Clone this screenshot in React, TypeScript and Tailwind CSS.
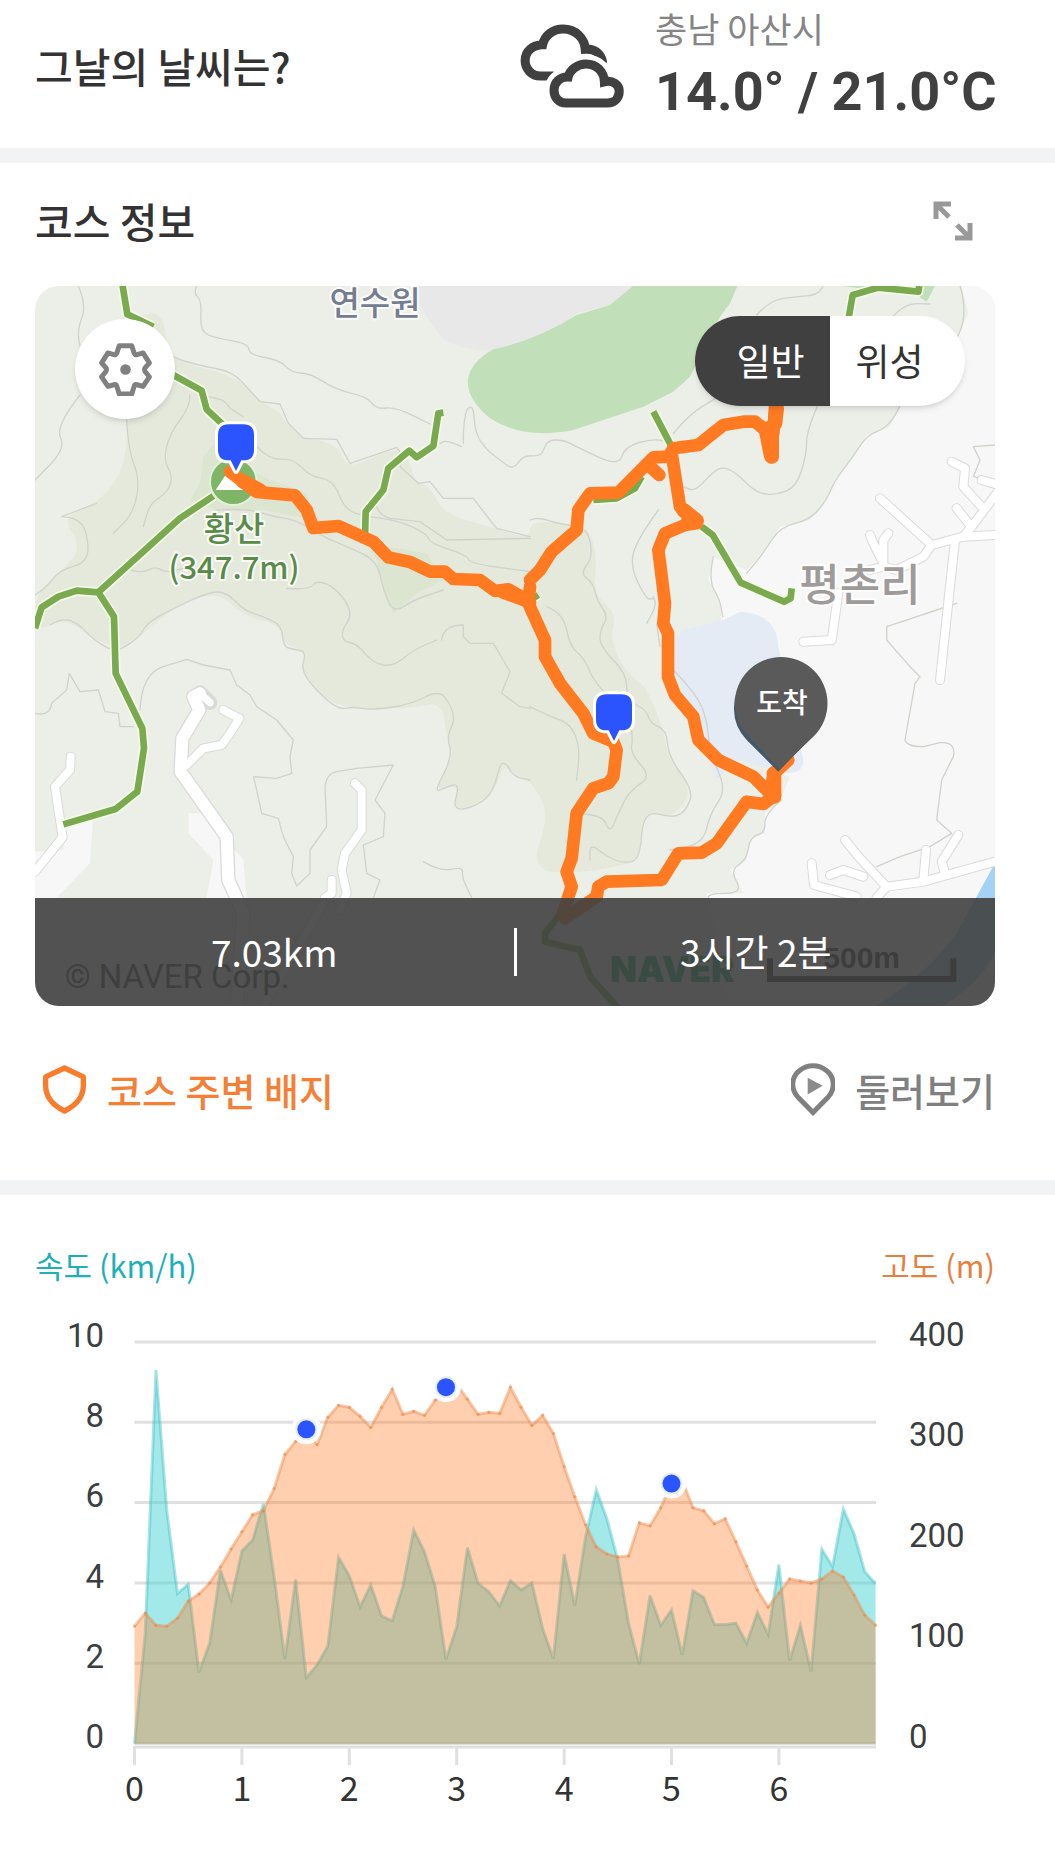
import { useState } from "react";

const speeds = [
  0, 2.75, 9.3, 5.82, 3.74, 3.97, 1.78, 2.5, 4.32, 3.58, 4.8, 5.07, 5.97, 4.16, 2.11, 4.09, 1.65, 1.96,
  2.43, 4.64, 4.18, 3.41, 3.95, 3.18, 3.06, 3.93, 5.32, 4.78, 3.91, 2.1, 2.91, 4.88, 3.99, 3.78, 3.43,
  4.06, 3.83, 4, 2.87, 2.12, 4.72, 3.44, 5.15, 6.32, 5.58, 4.57, 3, 1.98, 3.69, 2.95, 3.33, 2.21, 3.81,
  3.64, 2.97, 2.97, 3, 2.5, 3.27, 2.72, 4.46, 2.07, 2.95, 1.8, 4.84, 4.41, 5.84, 5.22, 4.28, 3.99,
];

const altitudes = [
  117, 130, 118, 117, 125, 142, 149, 160, 176, 194, 211, 228, 232, 254, 288, 301, 313, 298, 325, 337,
  335, 326, 315, 335, 353, 328, 331, 327, 342, 355, 358, 343, 328, 330, 329, 355, 335, 317, 327, 309,
  276, 246, 218, 196, 189, 186, 187, 220, 217, 235, 259, 262, 235, 232, 219, 224, 201, 177, 153, 136,
  150, 164, 162, 160, 164, 172, 166, 148, 128, 118,
];

const spots = [16, 29, 50];

const contours = [
  "M145 18L170 75L142 150L150 200M150 345L75 440L108 505L15 600",
  "M500 18L490 40L515 60L510 155L560 175L655 190L658 225L750 240L785 278L840 280L920 330L1010 350L1040 388L1095 380L1200 432",
  "M415 220C440 240 480 248 520 258S600 265 640 310L690 365L750 372L775 430L820 475L920 478L960 550L1020 530L1100 502L1120 530L1110 560L1165 610L1200 605L1240 655L1330 655L1380 720L1400 745L1500 770",
  "M520 345C560 360 580 350 600 385L640 410M680 500L720 540L790 535L840 590L910 600L945 690L1010 710L1100 720L1190 760L1200 790L1310 825L1320 850L1500 875",
  "M1040 650Q1030 700 1080 715L1170 725L1250 780L1500 775",
  "M290 420L295 510L330 600L310 700L250 760M480 345L480 380L420 460L400 540L430 590L410 640L360 670L340 740",
  "M95 710L155 712L178 800L165 850L90 870L50 920L15 945M200 670L160 685L95 710",
  "M300 870L340 880L375 858L410 880L470 862M560 690L650 685L730 710L800 720L880 770L950 800L1040 840L1060 930L1090 1000L1150 960L1240 930",
  "M770 925L840 930L860 900L920 925L970 1000L935 1050L940 1085L980 1090L1030 1150L1090 1160L1150 1110L1220 1080",
  "M60 1035L100 1012L150 1035L180 1070L240 1110L270 1110L330 1070L350 1030L420 990L550 930L600 945L640 990L700 1010L755 1035L760 1100L790 1108L830 1115L810 1180L920 1290L970 1280L1020 1290L1140 1275L1225 1230L1260 1270L1275 1320L1250 1370L1268 1430L1210 1540L1250 1520L1290 1510L1265 1600L1370 1565L1400 1500L1410 1450L1430 1450L1450 1490L1500 1500",
  "M1235 1080Q1240 1035 1300 1035L1300 1070L1320 1090L1390 1090L1440 1175L1415 1240L1470 1280L1500 1285",
  "M330 1290Q335 1180 400 1160L470 1138L520 1155L600 1170L620 1215L660 1245L680 1280L740 1320L790 1380L780 1430L785 1480L740 1495L670 1490L680 1530L695 1600L745 1615L760 1670L790 1730L785 1780L800 1818L840 1780L840 1710L890 1640L885 1520Q890 1480 920 1475L980 1465L1090 1455L1035 1560L1065 1600L1060 1670L1000 1695L1010 1780L1050 1800L1030 1853",
  "M15 1300Q60 1310 65 1270L110 1230L118 1180L150 1235L205 1230L225 1295L265 1300L270 1340L310 1340M1180 1745L1230 1775L1300 1760L1295 1790L1325 1853",
  "M1295 500L1250 480L1230 490M1300 490L1300 400L1330 370L1335 460L1370 510L1410 540L1450 570L1480 525L1535 530L1550 480L1600 480L1640 500L1765 560L1785 500L1870 475L1930 490",
  "M1930 460L1980 400L2060 355L2110 310L2250 260M2180 105L2220 60L2300 50L2360 45L2380 18M2370 360L2330 450L2330 520L2300 620L2240 645L2180 640L2120 580L2080 560L2050 575L1995 635L1960 620",
  "M2590 108L2625 70L2700 72M2790 18L2815 100L2760 220M2610 378L2580 440L2510 465L2470 530L2415 600L2390 660L2340 720L2250 740L2200 820L2150 880",
  "M1500 720L1520 710L1600 735L1670 740L1690 830L1650 880L1690 910L1700 960L1735 1010L1710 1050L1710 1100L1790 1180L1790 1260L1850 1290L1860 1330L1910 1350L1915 1430L1990 1530L1970 1590L1930 1615L1840 1590L1830 1740L1780 1750L1730 1730L1680 1690L1680 1740",
  "M1885 690L1820 780L1800 860L1850 960L1870 955M1850 1030L1880 980L1870 950M1550 980L1600 1000L1620 1100L1660 1130L1700 1220L1790 1290L1810 1370L1800 1420L1865 1490L1800 1530L1765 1600L1740 1660L1720 1610L1650 1600",
  "M1500 1280L1560 1310L1620 1330L1650 1400L1640 1500M2050 830L2035 900L2070 960L2078 1010M1890 1100L1880 1030M1920 1160L1990 1230L2030 1310L2040 1420L2090 1530L2040 1600L2020 1690L1920 1710",
  "M2255 1560L2205 1600L2205 1660L2160 1670L2150 1740L2100 1770L2140 1840L2030 1840L2040 1870",
];

// narrow farm roads around the villages
const lanes = [
  "M15 1775L98 1672L75 1520L120 1470L122 1430",
  "M470 1455L520 1405L575 1395L600 1360L628 1315L580 1290",
  "M2550 655L2705 795M2705 795L2680 830L2600 870L2560 860L2520 870M2705 795L2800 770L2900 765",
  "M2800 770L2825 740L2900 640M2820 735L2780 685M2850 675L2800 620L2805 565L2765 545M2855 600L2895 612",
  "M2775 780L2730 1200M2560 850L2530 790L2520 765M2560 850L2560 780L2575 760M2425 940L2405 1080L2320 1085",
  "M2345 1750L2352 1815L2480 1850M2445 1680L2490 1735L2570 1820L2540 1853M2570 1820L2680 1805L2895 1745M2680 1800L2688 1710M2745 1780L2735 1745L2785 1665M2400 1785L2440 1770L2500 1790",
  "M975 1510L995 1530L995 1650L945 1720L935 1770L950 1840L930 1890M905 1800L905 1840L885 1853M880 1870L700 2180",
];

const trails = [
  "M275 0L292 103L370 140M430 285L515 332L530 388L580 435",
  "M1240 398L1225 400L1210 498L1160 532L1138 512L1075 565L1060 630L1007 695L1005 770",
  "M550 648L450 715L205 937L140 932L85 950L35 982L15 1045M205 937L252 1010L257 1180L337 1345L342 1405L322 1535L257 1587L100 1633",
  "M1870 395L1925 500M2015 740L2048 765L2132 908L2262 965L2282 955L2285 925M2455 120L2468 45L2545 23L2665 35L2668 18",
  "M1690 660L1760 655L1815 625L1835 590M1500 960L1525 945M1590 1902L1545 1960L1545 1985L1650 2010L1680 2090L1770 2190",
];

// walked route
const route = [
  "M600 575L680 636L795 646L830 690L850 744L925 738L1030 785L1075 832L1140 846L1200 875L1245 875L1270 897L1350 900L1395 933L1435 928L1500 965",
  "M1500 900L1530 870L1565 815L1640 750L1645 690L1680 640L1765 638L1870 532L1915 530L1930 505L2005 495L2080 435L2140 425L2175 425L2205 450L2220 525",
  "M1855 555L1888 585M2235 380L2230 460L2195 440",
  "M1925 520L1950 680L2000 730L1965 735L1905 760L1885 810L1905 970L1900 1030L1914 1060L1914 1190L1935 1245L1990 1310L2005 1380L2065 1440L2170 1490L2220 1540L2232 1480L2275 1440",
  "M1500 920L1495 970L1545 1080L1545 1130L1590 1210L1660 1300L1690 1360L1750 1385L1760 1410L1750 1490L1735 1510L1690 1525L1640 1600L1625 1735L1610 1775L1625 1820L1600 1895L1605 1915L1700 1850L1705 1820L1730 1805L1895 1800L1945 1720L2015 1718L2060 1690L2150 1565L2200 1572L2235 1545",
];

// rounds the corners of an M/L path by curving through segment midpoints
function smooth(d: string) {
  return d
    .split("M")
    .filter(Boolean)
    .map((part) => {
      if (/[QCS]/.test(part)) return `M${part}`;
      const pts = part.replace("Z", "").split("L").map((p) => p.split(" ").map(Number));
      const last = pts[pts.length - 1];
      let out = `M${pts[0][0]} ${pts[0][1]}`;
      for (let i = 1; i < pts.length - 1; i++) {
        out += `Q${pts[i][0]} ${pts[i][1]} ${(pts[i][0] + pts[i + 1][0]) / 2} ${(pts[i][1] + pts[i + 1][1]) / 2}`;
      }
      return `${out}L${last[0]} ${last[1]}`;
    })
    .join("");
}

function areaPoints(values: number[], max: number) {
  return values.map((v, i) => `${134.5 + i * 10.74},${1743.7 - (v / max) * 401.7}`).join(" ");
}

function CloudIcon() {
  return (
    <svg viewBox="30 56 309 250" className="h-[84px] w-[104px]" fill="none" stroke="#404040" strokeWidth="27" aria-hidden="true">
      <path d="M130 211H90C65 211 45 190 45 165C45 138 66 119 97 118C103 90 128 71 158 71C195 71 222 98 224 131C250 129 272 142 276 172" />
      <path d="M166 291C145 291 131 274 131 253C131 230 148 213 173 214C178 192 200 175 226 175C258 175 280 198 281 228C305 222 325 236 325 256C325 277 310 291 290 291Z" stroke="#fff" strokeWidth="56" fill="#fff" />
      <path d="M166 291C145 291 131 274 131 253C131 230 148 213 173 214C178 192 200 175 226 175C258 175 280 198 281 228C305 222 325 236 325 256C325 277 310 291 290 291Z" />
    </svg>
  );
}

function GearIcon() {
  return (
    <svg viewBox="205 187 160 160" className="h-[53px] w-[53px]" aria-hidden="true">
      <path
        d="M266 195H304L311 217Q313 224 320 222L338 217L357 247L344 262Q341 267 344 273L357 289L338 318L320 313Q313 311 311 318L304 341H266L259 318Q257 311 250 313L232 318L213 289L226 273Q229 267 226 262L213 247L232 217L250 222Q257 224 259 217Z"
        fill="none"
        stroke="#808080"
        strokeWidth="15"
        strokeLinejoin="round"
      />
      <circle cx="285" cy="267" r="16" fill="#808080" />
    </svg>
  );
}

function Waypoint({ x, y }: { x: number; y: number }) {
  return (
    <path
      transform={`translate(${x} ${y})`}
      d="M-22 -54H22Q54 -54 54 -22V22Q54 54 22 54H16L0 86L-16 54H-22Q-54 54 -54 22V-22Q-54 -54 -22 -54Z"
      fill="#2b54ff"
      stroke="#fff"
      strokeWidth="18"
      paintOrder="stroke"
      strokeLinejoin="round"
    />
  );
}

function CourseMap() {
  return (
    <svg viewBox="15 18 2880 2160" className="block w-full" strokeLinejoin="round" strokeLinecap="round" role="img" aria-label="코스 지도">
      <rect x="15" y="18" width="2880" height="2160" fill="#ecefe8" />
      <path d="M2790 0L2815 100L2760 220L2610 378L2580 440L2510 465L2470 530L2415 600L2390 660L2340 720L2250 740L2200 820L2150 870L2050 830L2035 900L2070 960L2078 1080L2255 1560L2205 1600L2205 1660L2160 1670L2150 1740L2100 1770L2140 1840L2030 1840L2100 2200H2900V0Z" fill="#f7f7f7" />
      <path
        d={smooth(
          "M335 108L375 90L405 130L415 220L480 255L620 290L700 372L750 395L800 470L920 490L950 560L1000 545L1100 502L1140 540L1150 600L1200 620L1240 700L1380 740L1500 778L1500 720L1660 735L1690 780L1700 850L1690 940L1760 1000L1740 1080L1790 1180L1850 1220L1900 1350L1915 1430L1990 1530L1930 1615L1840 1590L1830 1740L1760 1760L1640 1780L1500 1770L1560 1600L1500 1500L1450 1490L1420 1450L1390 1550L1265 1600L1290 1510L1210 1540L1265 1430L1250 1370L1235 1265L1150 1285L920 1290L810 1180L830 1120L790 1100L760 1090L750 1035L640 1010L560 930L420 990L330 1070L270 1110L180 1070L100 1012L15 1060L15 940L100 870L155 800L95 710L200 670L270 590L290 500L290 420L340 350Z",
        )}
        fill="#e5e9dc"
      />
      <path d="M570 470L520 530L510 610L480 660L560 690L700 690L850 720L830 640L700 590L650 560ZM1010 790L1190 820L1240 900L1160 940L1090 1000L1060 930L1040 840Z" fill="#dce5d0" />
      <path d="M2060 1500L1930 1190L1935 1080L1960 1050L2080 1020L2130 995Q2240 1000 2245 1100L2320 1440Q2320 1480 2270 1480L2120 1440Z" fill="#e4ebf4" />
      <path d="M1935 1180L1985 1290L2050 1430L2120 1445L2280 1490L2250 1560L2150 1550L1950 1300Z" fill="#ecefe8" />
      <path d="M15 1715L100 1710L100 1630L190 1600L180 1750L80 1853H15ZM475 1600H520L640 1740L650 1853H530L550 1740L475 1660Z" fill="#f7f7f7" />
      <path d="M1160 0V60Q1195 120 1235 175Q1300 215 1400 212Q1520 200 1640 100L1740 75L1830 0Z" fill="#e8e8e8" />
      <path d="M1390 208Q1520 180 1640 105L1740 75L1830 0H2130L2100 70L2070 110L1980 290L1930 335L1840 380L1630 450Q1480 480 1380 415C1280 330 1300 260 1390 208ZM2435 18H2715L2690 65L2650 40L2560 34Z" fill="#c1e0b9" />
      <path d="M2900 1740Q2840 1850 2780 1960Q2680 2100 2500 2200H2700Q2880 2100 2900 1990Z" fill="#a3d2f5" />

      <g fill="none" stroke="#d0d3cb" strokeWidth="4">
        {contours.map((d) => (
          <path key={d} d={smooth(d)} />
        ))}
        <path d="M2780 970L2720 990L2570 1040V1080L2640 1160L2670 1190L2655 1210L2625 1380Q2630 1400 2680 1400L2730 1388Q2780 1385 2770 1430L2735 1500L2720 1620L2765 1660L2700 1700L2610 1730L2540 1760M2880 600L2830 590L2850 540L2830 500L2895 495" />
      </g>

      <g fill="none" stroke="#dadada">
        <path d="M540 1268L510 1238L490 1250L508 1290L457 1375L452 1475L590 1670L595 1800L640 1900L620 2180" strokeWidth="44" />
        {lanes.map((d) => (
          <path key={d} d={d} strokeWidth="30" />
        ))}
      </g>
      <g fill="none" stroke="#fff">
        <path d="M510 1240L490 1250L508 1290L457 1375L452 1475L590 1670L595 1800L640 1900L620 2180" strokeWidth="36" />
        <path d="M540 1268L510 1240" strokeWidth="22" />
        {lanes.map((d) => (
          <path key={d} d={d} strokeWidth="24" />
        ))}
      </g>

      <g fill="none" strokeLinecap="butt">
        {trails.map((d) => (
          <path key={d} d={d} stroke="#f4fbe9" strokeWidth="30" />
        ))}
        {trails.map((d) => (
          <path key={d} d={d} stroke="#7aa94f" strokeWidth="20" />
        ))}
      </g>

      <circle cx="610" cy="605" r="70" fill="#7fb566" stroke="#e4f0da" strokeWidth="6" />
      <path d="M557 630L610 550L663 630Z" fill="#fff" />

      <g fill="none" stroke="#ff7a20" strokeWidth="38">
        {route.map((d) => (
          <path key={d} d={d} />
        ))}
        <path d="M1960 690L2000 722M2225 440V530M1990 715L1975 725M2232 1480V1550M2240 385L2235 430M640 605L690 632M1420 935L1490 960" strokeWidth="44" />
      </g>

      <g fontFamily="'Noto Sans CJK KR', sans-serif" textAnchor="middle" stroke="#fff" strokeWidth="12" strokeOpacity="0.8" paintOrder="stroke" fontWeight="500">
        <text x="1035" y="105" fontSize="99" fill="#757d91">연수원</text>
        <text x="612" y="782" fontSize="99" fill="#5b8b48">황산</text>
        <text x="612" y="897" fontSize="93" fill="#5b8b48">(347.7m)</text>
        <text x="2490" y="962" fontSize="132" fill="#a09b9b">평촌리</text>
      </g>

      <Waypoint x={618} y={487} />
      <Waypoint x={1752} y={1297} />

      <path d="M2245 1475L2150 1380Q2112 1340 2112 1288A139 139 0 0 1 2390 1277Q2390 1320 2352 1364Z" fill="#45586a" />
      <path d="M2248 1468L2155 1368A139 139 0 1 1 2352 1368Z" fill="#5a5a5a" />
      <text x="2256" y="1298" fontSize="84" fontWeight="500" fill="#fff" textAnchor="middle" fontFamily="'Noto Sans CJK KR', sans-serif">도착</text>

      <text x="104" y="2123" fontSize="99" fill="#333" fontFamily="Roboto, sans-serif">© NAVER Corp.</text>
      <text x="1740" y="2105" fontSize="105" fontWeight="900" fill="#00a860" fontFamily="Inter, sans-serif">NAVER</text>
      <text x="2495" y="2065" fontSize="90" fontWeight="700" fill="#222" textAnchor="middle" fontFamily="'Liberation Sans', sans-serif">500m</text>
      <path d="M2220 2035V2097H2770V2035" fill="none" stroke="#222" strokeWidth="18" strokeLinecap="butt" strokeLinejoin="miter" />
    </svg>
  );
}

function CourseChart() {
  const speedLine = areaPoints(speeds, 10);
  const altitudeLine = areaPoints(altitudes, 400);

  return (
    <svg viewBox="0 1310 1055 500" className="block w-full" role="img" aria-label="속도와 고도">
      <g stroke="#e0e0e0" strokeWidth="3">
        {[0, 1, 2, 3, 4, 5].map((n) => (
          <line key={n} x1="134.5" x2="876" y1={1342 + n * 80.3} y2={1342 + n * 80.3} />
        ))}
        <line x1="134.5" x2="876" y1="1747" y2="1747" />
        {[0, 1, 2, 3, 4, 5, 6].map((n) => (
          <line key={n} x1={134.5 + n * 107.4} x2={134.5 + n * 107.4} y1="1746" y2="1765" />
        ))}
      </g>

      <polygon points={`134.5,1743.7 ${speedLine} 875.6,1743.7`} fill="#47d3d5" fillOpacity="0.5" />
      <polyline points={speedLine} fill="none" stroke="#34bcc0" strokeOpacity="0.4" strokeWidth="3" />
      <polygon points={`134.5,1743.7 ${altitudeLine} 875.6,1743.7`} fill="#ff761d" fillOpacity="0.35" />
      <polyline points={altitudeLine} fill="none" stroke="#f08a48" strokeOpacity="0.45" strokeWidth="3" />
      {altitudes.map((m, i) => (
        <circle key={i} cx={134.5 + i * 10.74} cy={1743.7 - m * 1.00425} r="1.5" fill="#ec8445" fillOpacity="0.6" />
      ))}

      {spots.map((i) => (
        <g key={i}>
          <circle cx={134.5 + i * 10.74} cy={1743.7 - altitudes[i] * 1.00425} r="15" fill="#fff" />
          <circle cx={134.5 + i * 10.74} cy={1743.7 - altitudes[i] * 1.00425} r="11" fill="#e8edff" />
          <circle cx={134.5 + i * 10.74} cy={1743.7 - altitudes[i] * 1.00425} r="9" fill="#2b54ff" />
        </g>
      ))}

      <g fill="#3c3f41" fontFamily="Roboto, sans-serif" fontSize="33">
        {[10, 8, 6, 4, 2, 0].map((v, i) => (
          <text key={v} x="104" y={1347 + i * 80.2} textAnchor="end">{v}</text>
        ))}
        {[400, 300, 200, 100, 0].map((v, i) => (
          <text key={v} x="909" y={1346 + i * 100.4} textAnchor="start">{v}</text>
        ))}
      </g>
      <g fill="#333" fontFamily="'Noto Sans CJK KR', sans-serif" fontSize="34" textAnchor="middle">
        {[0, 1, 2, 3, 4, 5, 6].map((v) => (
          <text key={v} x={134.5 + v * 107.4} y="1801">{v}</text>
        ))}
      </g>
    </svg>
  );
}

export default function App() {
  const [mapType, setMapType] = useState("normal");

  return (
    <main className="min-h-screen bg-white font-['Noto_Sans_CJK_KR',sans-serif] text-[#333]">
      <section className="flex h-[148px] items-center justify-between pr-[60px] pb-4 pl-[35px]">
        <h2 className="text-[41px] font-medium">그날의 날씨는?</h2>
        <div className="flex items-center gap-[31px]">
          <CloudIcon />
          <div className="w-[340px] pt-2">
            <p className="text-[35px] leading-[44px] text-[#858585]">충남 아산시</p>
            <p className="font-[Roboto,sans-serif] text-[54px] leading-[84px] font-bold whitespace-nowrap text-[#404040]">14.0° / 21.0°C</p>
          </div>
        </div>
      </section>

      <div className="h-[15px] bg-[#f1f3f5]" />

      <section className="pr-[60px] pl-[35px]">
        <div className="flex h-[123px] items-center justify-between pr-[22px] pb-2">
          <h2 className="text-[41px] font-medium">코스 정보</h2>
          <button type="button" aria-label="지도 확대">
            <svg viewBox="0 0 40 40" className="h-10 w-10" fill="none" stroke="#999" strokeWidth="5" aria-hidden="true">
              <path d="M3 18V3H18M3 3L16 16M37 22V37H22M37 37L24 24" />
            </svg>
          </button>
        </div>

        <div className="relative overflow-hidden rounded-[24px]">
          <CourseMap />
          <button
            type="button"
            aria-label="지도 설정"
            className="absolute top-[33px] left-10 flex h-[100px] w-[100px] items-center justify-center rounded-full bg-white shadow-md"
          >
            <GearIcon />
          </button>
          <div className="absolute top-[30px] right-[30px] flex h-[90px] w-[270px] overflow-hidden rounded-full bg-white text-[37px] shadow-md">
            <button
              type="button"
              onClick={() => setMapType("normal")}
              className={mapType === "normal" ? "flex-1 bg-[#404040] pl-4 text-white" : "flex-1 pl-4"}
            >
              일반
            </button>
            <button
              type="button"
              onClick={() => setMapType("satellite")}
              className={mapType === "satellite" ? "flex-1 bg-[#404040] pr-4 text-white" : "flex-1 pr-4"}
            >
              위성
            </button>
          </div>
          <div className="absolute inset-x-0 bottom-0 flex h-[108px] items-center bg-[#404040]/90 text-[37px] text-white">
            <span className="flex-1 text-center">7.03km</span>
            <span className="h-12 w-[3px] bg-white" />
            <span className="flex-1 text-center">3시간 2분</span>
          </div>
        </div>

        <div className="flex h-[174px] items-center justify-between pb-2 text-[38px] font-medium">
          <button type="button" className="flex items-center gap-[21px] pl-2 text-[#f58033]">
            <svg viewBox="40 46 130 148" className="h-[49px] w-[43px]" fill="none" stroke="#f97b2c" strokeWidth="16" strokeLinejoin="round" aria-hidden="true">
              <path d="M105 55L162 82V108C162 145 140 168 105 185C70 168 48 145 48 108V82Z" />
            </svg>
            코스 주변 배지
          </button>
          <button type="button" className="flex items-center gap-5 text-[#808080]">
            <svg viewBox="36 42 132 158" className="h-[53px] w-[44px]" aria-hidden="true">
              <path d="M102 190L57 144C33 118 38 82 62 64C86 45 118 45 142 64C166 82 171 118 147 144Z" fill="none" stroke="#808080" strokeWidth="15" />
              <path d="M86 86L131 110L86 136Z" fill="#8a8c8c" />
            </svg>
            둘러보기
          </button>
        </div>
      </section>

      <div className="h-[15px] bg-[#f1f3f5]" />

      <section className="pb-11">
        <div className="flex h-[115px] items-end justify-between pr-[60px] pb-[22px] pl-[35px] text-[31px]">
          <span className="text-[#1fb0b6]">속도 (km/h)</span>
          <span className="text-[#e5803f]">고도 (m)</span>
        </div>
        <CourseChart />
      </section>
    </main>
  );
}
